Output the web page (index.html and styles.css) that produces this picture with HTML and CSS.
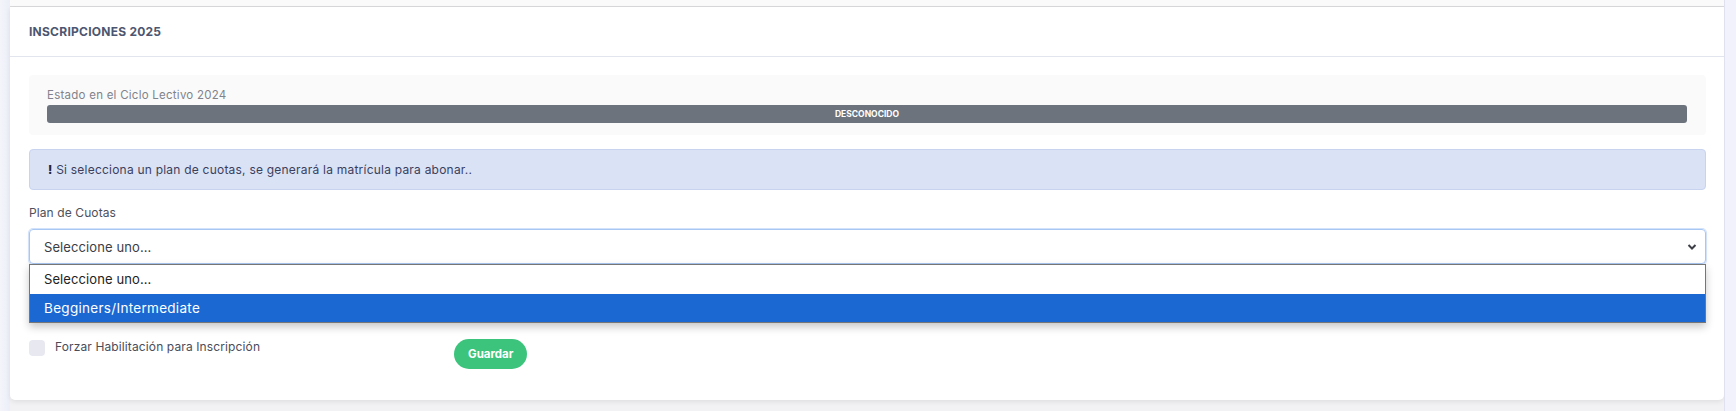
FILE: index.html
```html
<!DOCTYPE html>
<html lang="es">
<head>
<meta charset="utf-8">
<title>Inscripciones 2025</title>
<link rel="stylesheet" href="styles.css">
</head>
<body>
<div class="page">
  <div class="gutter-left"></div>
  <main class="main">
    <div class="prev-card"></div>
    <section class="card">
      <header class="card-header">
        <h2 class="card-title">INSCRIPCIONES 2025</h2>
      </header>
      <div class="card-body">
        <div class="status-box">
          <div class="status-label">Estado en el Ciclo Lectivo 2024</div>
          <div class="status-bar">DESCONOCIDO</div>
        </div>
        <div class="alert"><b class="bang">!</b> Si selecciona un plan de cuotas, se generará la matrícula para abonar..</div>
        <label class="field-label">Plan de Cuotas</label>
        <div class="select-wrap">
          <div class="select">
            <span>Seleccione uno...</span>
            <svg class="chevron" width="10" height="8" viewBox="0 0 10 8"><path d="M1.5 2 L5 5.5 L8.5 2" fill="none" stroke="#3d3f47" stroke-width="2"/></svg>
          </div>
          <ul class="dropdown">
            <li class="option">Seleccione uno...</li>
            <li class="option selected">Begginers/Intermediate</li>
          </ul>
        </div>
        <div class="row">
          <div class="col">
            <label class="check">
              <span class="check-box"></span>
              <span class="check-text">Forzar Habilitación para Inscripción</span>
            </label>
          </div>
          <div class="col">
            <button class="btn-save">Guardar</button>
          </div>
        </div>
      </div>
    </section>
  </main>
  <div class="gutter-right"></div>
</div>
</body>
</html>
```

FILE: styles.css
```css
* { box-sizing: border-box; }
html, body { margin: 0; padding: 0; }
body {
  font-family: "Inter", "Open Sans", sans-serif;
  background: #f2f2f5;
  color: #3b3f5c;
  height: 411px;
  overflow: hidden;
}
.page {
  display: flex;
  height: 411px;
}
.gutter-left {
  width: 10px;
  flex: none;
  background: linear-gradient(to right, #f4f5fb, #eceef8);
}
.gutter-right {
  width: 12px;
  flex: none;
  background: #f1f2fb;
  border-left: 1px solid #dfe1ee;
}
.main {
  flex: 1;
  display: flex;
  flex-direction: column;
  background: #f2f2f4;
}
.prev-card {
  height: 7px;
  flex: none;
  background: #fafafa;
  border-bottom: 1px solid #d9d9dc;
}
.card {
  background: #fff;
  border-radius: 0 0 5px 5px;
  box-shadow: 0 2px 5px rgba(0,0,0,0.08);
}
.card-header {
  height: 50px;
  padding: 0 19px;
  display: flex;
  align-items: center;
  border-bottom: 1px solid #e2e4ee;
}
.card-title {
  margin: 0;
  font-size: 12px;
  font-weight: 700;
  color: #4c5670;
  letter-spacing: 0.25px;
}
.card-body {
  padding: 18px 18px 31px 19px;
}
.status-box {
  background: #fafafa;
  border-radius: 4px;
  padding: 12px 19px 12px 18px;
  height: 60px;
}
.status-label {
  font-size: 11.5px;
  line-height: 16px;
  color: #80838b;
  letter-spacing: 0.25px;
}
.status-bar {
  margin-top: 2px;
  height: 18px;
  border-radius: 3px;
  background: #6c737d;
  color: #fff;
  font-size: 8.5px;
  font-weight: 700;
  line-height: 18px;
  text-align: center;
}
.alert {
  margin-top: 14px;
  height: 41px;
  background: #dae2f6;
  border: 1px solid #c8d3f0;
  border-radius: 4px;
  padding: 0 18px;
  font-size: 12px;
  line-height: 39px;
  color: #3b3f5c;
  letter-spacing: 0.22px;
}
.bang {
  font-weight: 800;
  color: #22253a;
}
.field-label {
  display: block;
  margin-top: 15px;
  font-size: 12px;
  line-height: 16px;
  color: #4e505a;
  letter-spacing: 0.1px;
}
.select-wrap {
  position: relative;
  margin-top: 8px;
}
.select {
  height: 35px;
  border: 1px solid #a9c7f3;
  border-radius: 4px;
  box-shadow: 0 0 0 1px #d2e2fb, 0 2px 4px rgba(0,0,0,0.06);
  display: flex;
  align-items: center;
  justify-content: space-between;
  padding: 0 8px 0 14px;
  font-size: 13px;
  color: #3b3d44;
  letter-spacing: 0.1px;
}
.chevron { display: block; }
.dropdown {
  position: absolute;
  left: 0;
  right: 0;
  top: 35px;
  margin: 0;
  padding: 0;
  list-style: none;
  background: #fff;
  border: 1px solid #767676;
  box-shadow: 0 4px 8px rgba(0,0,0,0.22);
  z-index: 5;
}
.option {
  height: 28.5px;
  line-height: 28px;
  padding-left: 14px;
  font-size: 13px;
  color: #222;
  letter-spacing: 0.1px;
}
.option.selected {
  background: #1b68d3;
  color: #fff;
  font-size: 13.5px;
  letter-spacing: 0.3px;
}
.row {
  display: grid;
  grid-template-columns: 1fr 1fr 1fr 1fr;
  column-gap: 24px;
  margin-top: 75px;
}
.check {
  display: flex;
  align-items: flex-start;
  gap: 10px;
  padding-top: 1px;
}
.check-box {
  width: 16px;
  height: 16px;
  border-radius: 4px;
  background: #e8e9f0;
  flex: none;
}
.check-text {
  font-size: 12px;
  line-height: 14px;
  color: #4a4c58;
  letter-spacing: 0.12px;
}
.btn-save {
  height: 30px;
  width: 73px;
  border: none;
  border-radius: 15px;
  background: #3cc47c;
  color: #fff;
  font-family: inherit;
  font-size: 11.5px;
  font-weight: 700;
  padding: 0;
}
```
